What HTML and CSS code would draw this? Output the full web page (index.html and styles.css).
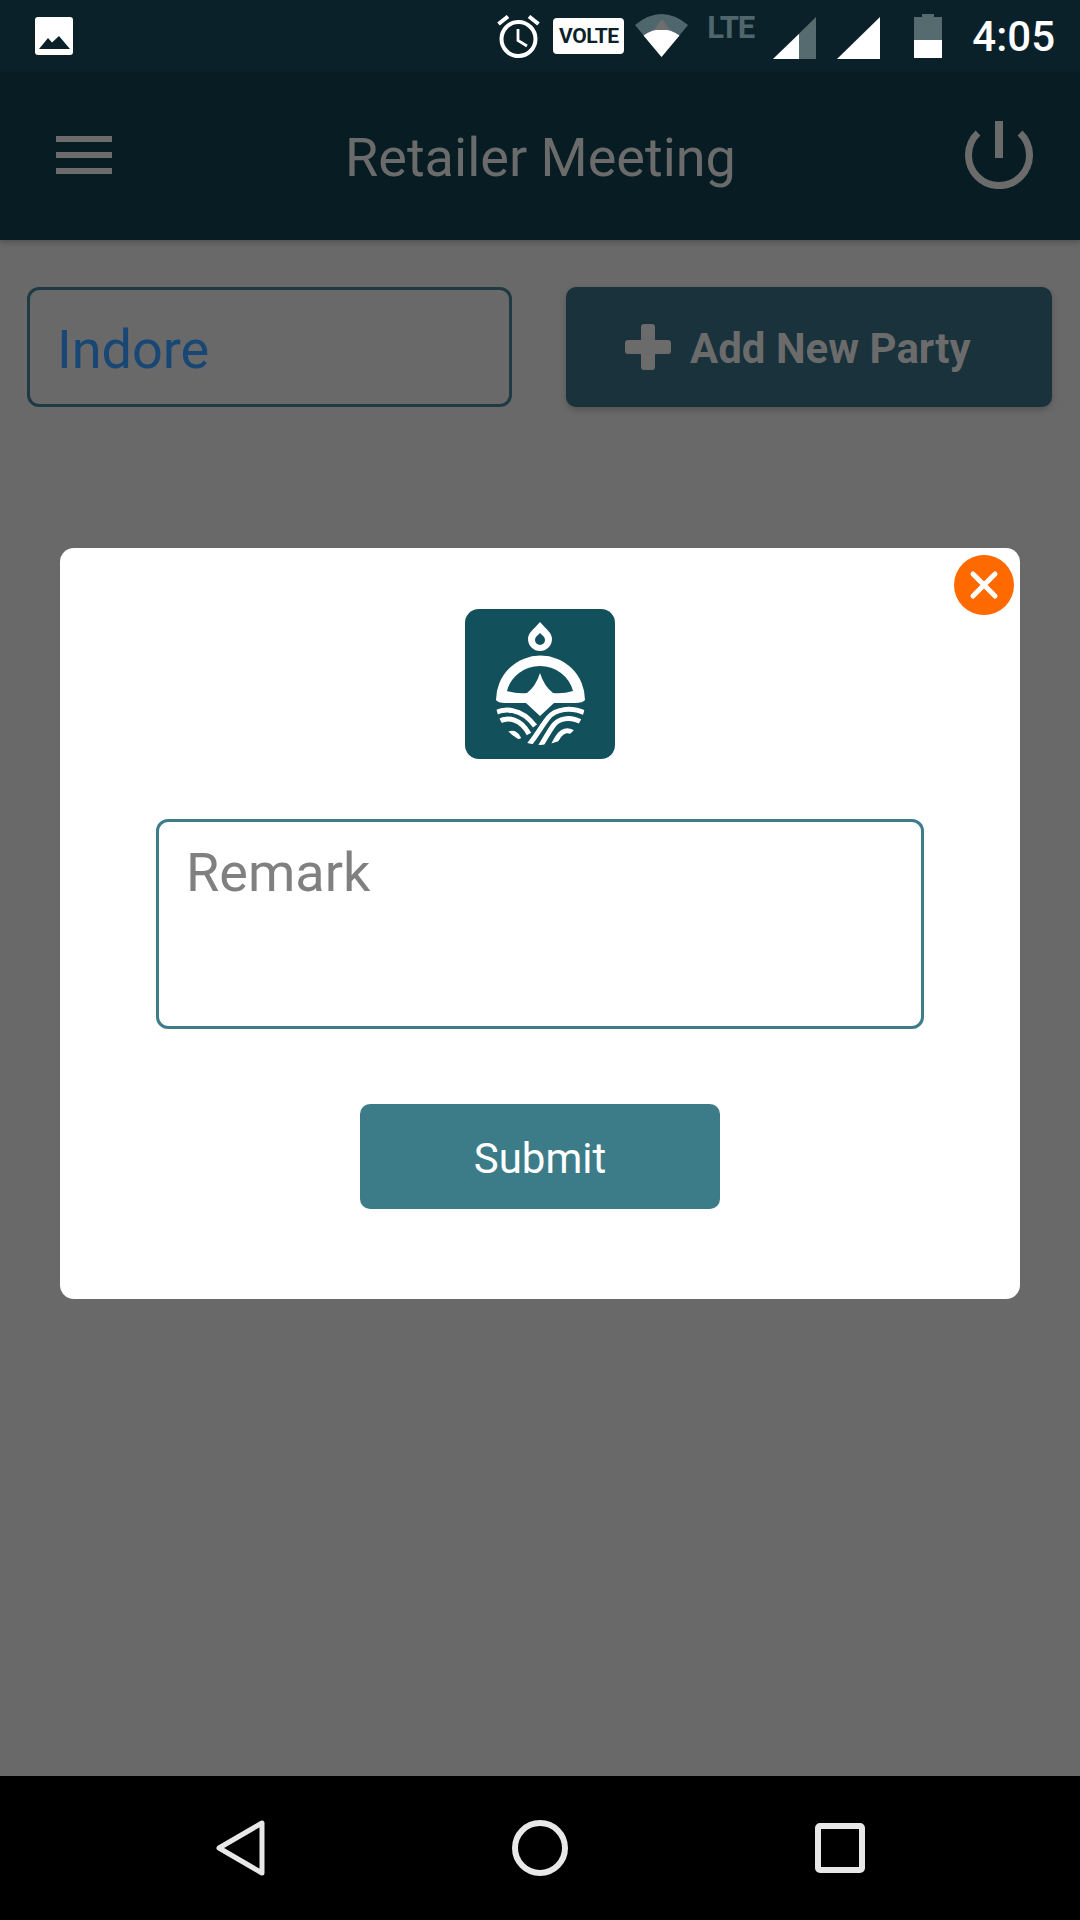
FILE: index.html
```html
<!DOCTYPE html>
<html lang="en">
<head>
  <meta charset="UTF-8" />
  <meta name="viewport" content="width=device-width, initial-scale=1.0"/>
  <title>Retailer Meeting</title>
  <link rel="stylesheet" href="styles.css">
</head>
<body>
  <div class="screen">
    <div class="status-bar">
      <svg class="ic-image" width="38" height="38" viewBox="0 0 38 38">
        <rect width="38" height="38" rx="3" fill="#fff"/>
        <path d="M4 32 L13 21 L17 25.500 L24 19 L35 32 Z" fill="#0a2129"/>
      </svg>
      <svg class="ic-alarm" width="43" height="43" viewBox="0 0 43 43" fill="none" stroke="#fff">
        <circle cx="21.500" cy="24" r="17" stroke-width="4"/>
        <path d="M1.500 9 L11 1.500 M41.500 9 L32 1.500" stroke-width="4"/>
        <path d="M21 14 V25.500 L30 31" stroke-width="2.800"/>
      </svg>
      <div class="volte">VOLTE</div>
      <svg class="ic-wifi" width="53" height="43" viewBox="0 0 53 43">
        <path d="M0 11 Q26.500 -11 53 11 L26.500 43 Z" fill="#4f666c"/>
        <path d="M8.500 21.500 Q26.500 9 44.500 21.500 L26.500 43 Z" fill="#fff"/>
        <path d="M19 16 L27 5 L35 16 Z" fill="#6e6e6e"/>
      </svg>
      <div class="lte">LTE</div>
      <svg class="ic-signal" width="43" height="42" viewBox="0 0 43 42">
        <path d="M0 42 L43 0 V42 Z" fill="#566b70"/>
        <path d="M0 42 L26 17 V42 Z" fill="#fff"/>
      </svg>
      <svg class="ic-signal ic-signal-full" width="43" height="42" viewBox="0 0 43 42">
        <path d="M0 42 L43 0 V42 Z" fill="#fff"/>
      </svg>
      <svg class="ic-battery" width="28" height="44" viewBox="0 0 28 44">
        <path d="M8 0 H20 V3 H28 V26 H0 V3 H8 Z" fill="#566b70"/>
        <rect y="26" width="28" height="18" fill="#fff"/>
      </svg>
      <div class="clock">4:05</div>
    </div>

    <header class="app-bar">
      <div class="menu"><span></span><span></span><span></span></div>
      <div class="app-title">Retailer Meeting</div>
      <svg class="power" width="68" height="68" viewBox="0 0 68 68" fill="none" stroke="#6b6b6b">
        <path d="M13 12 A30.500 30.500 0 1 0 55 12" stroke-width="7"/>
        <path d="M34 0 V37" stroke-width="8"/>
      </svg>
    </header>

    <main class="content">
      <div class="toolbar">
        <div class="city">Indore</div>
        <div class="add-party">
          <svg width="46" height="46" viewBox="0 0 46 46" fill="#6b6b6b">
            <rect x="16" width="14" height="46" rx="3"/>
            <rect y="16" width="46" height="14" rx="3"/>
          </svg>
          <span class="add-label">Add New Party</span>
        </div>
      </div>
    </main>

    <div class="nav-bar">
      <svg class="nav-back" width="49" height="56" viewBox="0 0 49 56" fill="none" stroke="#e8e8e8" stroke-width="5" stroke-linejoin="round">
        <path d="M46 3 V53 L3 28 Z"/>
      </svg>
      <svg class="nav-home" width="56" height="56" viewBox="0 0 56 56" fill="none" stroke="#e8e8e8" stroke-width="6">
        <circle cx="28" cy="28" r="25"/>
      </svg>
      <svg class="nav-recent" width="50" height="50" viewBox="0 0 50 50" fill="none" stroke="#e8e8e8" stroke-width="6" stroke-linejoin="round">
        <rect x="3" y="3" width="44" height="44" rx="2"/>
      </svg>
    </div>

    <div class="modal">
      <div class="modal-close">
        <svg width="30" height="30" viewBox="0 0 30 30" fill="none" stroke="#fff" stroke-width="5" stroke-linecap="round">
          <path d="M4 4 L26 26 M26 4 L4 26"/>
        </svg>
      </div>
      <svg class="logo" width="150" height="150" viewBox="0 0 150 150">
        <defs>
          <clipPath id="badge"><circle cx="75.500" cy="91" r="45"/></clipPath>
        </defs>
        <rect width="150" height="150" rx="14" fill="#12505c"/>
        <path d="M75 13 C82 21 87 24 87 30 A12 12 0 0 1 63 30 C63 24 68 21 75 13 Z" fill="#fff"/>
        <path d="M75 24 C78 27 80 28 80 31 A5 5 0 0 1 70 31 C70 28 72 27 75 24 Z" fill="#12505c"/>
        <path d="M31 91 A44.500 44.500 0 0 1 120 91 Q118 94 110 94 H89 L75 107 L61 94 H40 Q33 94 31 91 Z" fill="#fff"/>
        <path d="M42 82 A34 33 0 0 1 108 82 Q98 85 88 84 Q79 77 75 64 Q71 77 62 84 Q52 85 42 82 Z" fill="#12505c"/>
        <g clip-path="url(#badge)" fill="none" stroke="#fff" stroke-width="5">
          <path d="M28 105 C38 99 56 98 70 117"/>
          <path d="M33 113 C43 107 56 110 64 125"/>
          <path d="M44 125 Q50 122 54 130"/>
          <path d="M122 105 C106 97 90 100 83 109 C76 118 72 126 63 137"/>
          <path d="M118 114 C104 106 93 110 88 117 C83 124 80 130 75 138"/>
          <path d="M109 124 C100 118 94 124 88 137"/>
        </g>
      </svg>
      <div class="remark">Remark</div>
      <div class="submit">Submit</div>
    </div>
  </div>
</body>
</html>
```

FILE: styles.css
```css
* {
  box-sizing: border-box;
}

body {
  margin: 0;
  font-family: Roboto, "Noto Sans", sans-serif;
  background: #696969;
}

.screen {
  position: relative;
  width: 1080px;
  height: 1920px;
  display: flex;
  flex-direction: column;
  overflow: hidden;
}

/* STATUS BAR */
.status-bar {
  height: 72px;
  flex-shrink: 0;
  background: #0a2129;
  display: flex;
  align-items: center;
  padding: 0 25px 0 35px;
}

.ic-alarm {
  margin-left: auto;
}

.volte {
  width: 71px;
  height: 36px;
  margin-left: 13px;
  background: #fff;
  border-radius: 4px;
  color: #0a2129;
  font-size: 21px;
  font-weight: 700;
  line-height: 36px;
  text-align: center;
  letter-spacing: -0.5px;
}

.ic-wifi {
  margin-left: 11px;
  margin-top: -1px;
}

.lte {
  margin-left: 19px;
  margin-top: -17px;
  width: 53px;
  color: #4f666c;
  font-size: 31px;
  font-weight: 700;
  line-height: 26px;
  letter-spacing: -1px;
}

.ic-signal {
  margin-left: 13px;
  margin-top: 4px;
}

.ic-signal-full {
  margin-left: 21px;
}

.ic-battery {
  margin-left: 34px;
}

.clock {
  margin-left: 30px;
  color: #fff;
  font-size: 42px;
  font-weight: 500;
}

/* APP BAR */
.app-bar {
  height: 168px;
  flex-shrink: 0;
  background: #071d23;
  display: flex;
  align-items: center;
  justify-content: space-between;
  padding: 0 47px 0 56px;
  box-shadow: 0 2px 6px rgba(0, 0, 0, 0.25);
  position: relative;
}

.menu {
  width: 56px;
  display: flex;
  flex-direction: column;
  gap: 10px;
  margin-top: -2px;
}

.menu span {
  height: 6px;
  background: #6b6b6b;
}

.app-title {
  color: #6b6b6b;
  font-size: 54px;
  margin-left: 4px;
  margin-top: 3px;
}

.power {
  margin-top: -2px;
}

/* PAGE CONTENT */
.content {
  flex: 1;
  padding: 47px 28px 0 27px;
}

.toolbar {
  display: flex;
  justify-content: space-between;
}

.city {
  width: 485px;
  height: 120px;
  border: 3px solid #1f3a44;
  border-radius: 12px;
  padding-left: 27px;
  color: #184675;
  font-size: 54px;
  line-height: 119px;
}

.add-party {
  width: 486px;
  height: 120px;
  background: #19323b;
  border-radius: 10px;
  box-shadow: 0 3px 6px rgba(0, 0, 0, 0.2);
  display: flex;
  align-items: center;
  gap: 19px;
  padding-left: 59px;
  color: #6b6b6b;
  font-size: 42px;
  font-weight: 700;
}

.add-label {
  margin-top: 2px;
}

/* NAV BAR */
.nav-bar {
  height: 144px;
  flex-shrink: 0;
  background: #000;
  display: flex;
  align-items: center;
  padding-left: 216px;
}

.nav-home {
  margin-left: 247px;
}

.nav-recent {
  margin-left: 247px;
}

/* MODAL */
.modal {
  position: absolute;
  left: 60px;
  top: 548px;
  width: 960px;
  height: 751px;
  background: #fff;
  border-radius: 14px;
  display: flex;
  flex-direction: column;
  align-items: center;
  padding-top: 61px;
}

.modal-close {
  position: absolute;
  top: 7px;
  right: 6px;
  width: 60px;
  height: 60px;
  border-radius: 50%;
  background: #ff6a00;
  display: flex;
  align-items: center;
  justify-content: center;
}

.remark {
  width: 768px;
  height: 210px;
  margin-top: 60px;
  border: 3px solid #3d7d8a;
  border-radius: 12px;
  padding: 19px 27px;
  color: #808080;
  font-size: 54px;
}

.submit {
  width: 360px;
  height: 105px;
  margin-top: 75px;
  background: #3c7c89;
  border-radius: 10px;
  color: #fff;
  font-size: 42px;
  line-height: 109px;
  text-align: center;
}
```
